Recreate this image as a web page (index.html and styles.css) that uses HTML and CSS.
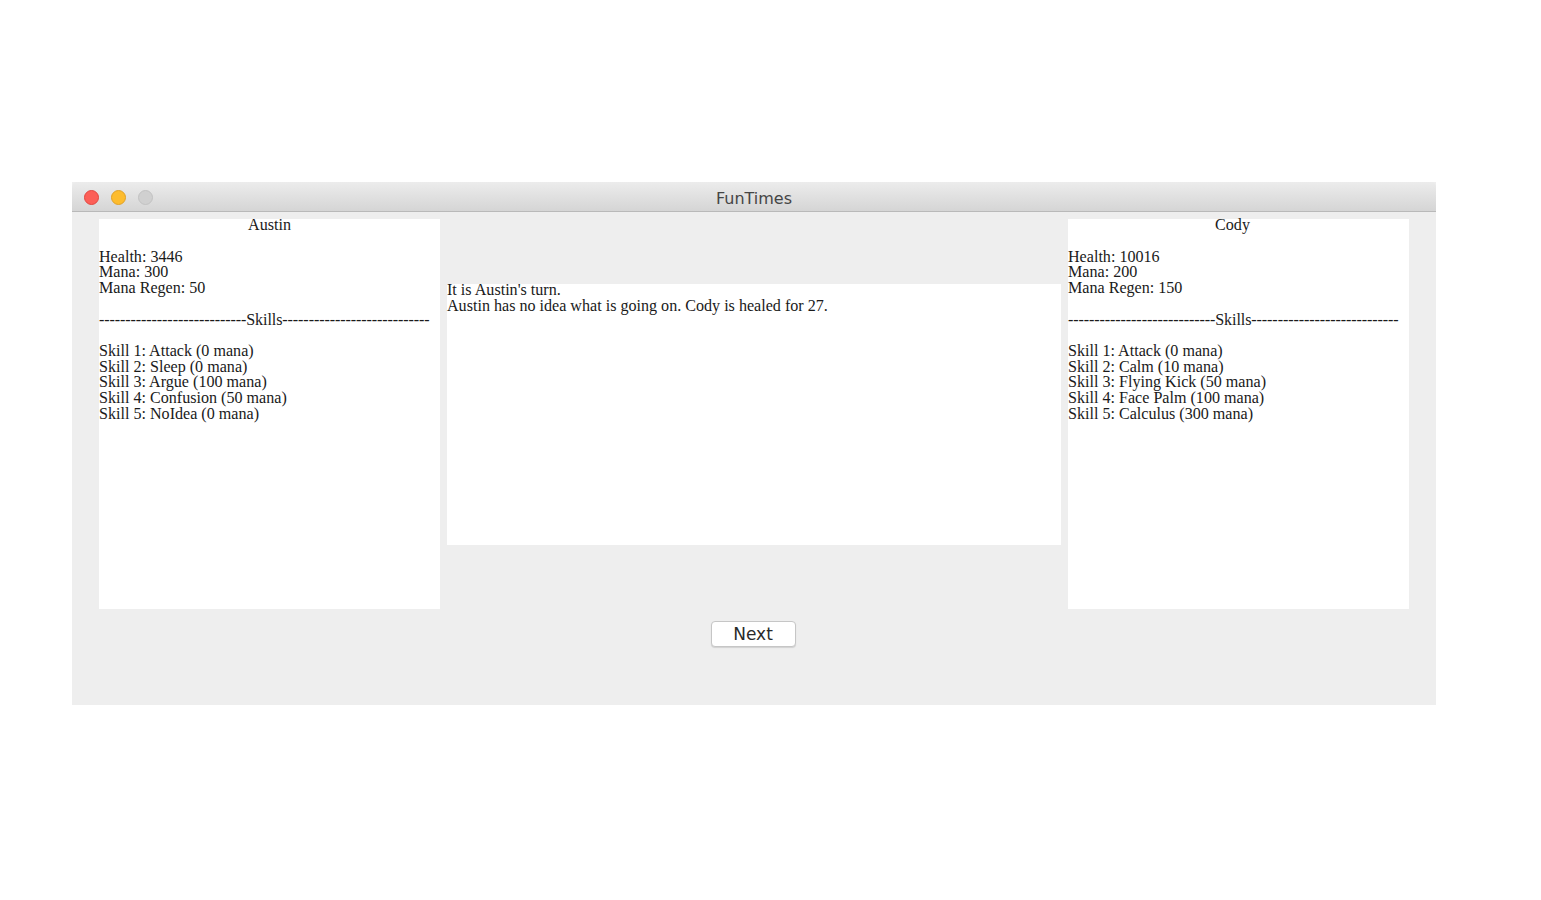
FILE: index.html
```html
<!DOCTYPE html>
<html>
<head>
<meta charset="utf-8">
<title>FunTimes</title>
<link rel="stylesheet" href="styles.css">
</head>
<body>
<div class="window">
  <div class="titlebar">
    <div class="lights">
      <span class="light red"></span>
      <span class="light yellow"></span>
      <span class="light gray"></span>
    </div>
    <div class="title">FunTimes</div>
  </div>
  <div class="content">
    <div class="panels">
      <div class="panel side">
        <div class="name">Austin</div>
        <div class="blank"></div>
        <div>Health: 3446</div>
        <div>Mana: 300</div>
        <div>Mana Regen: 50</div>
        <div class="blank"></div>
        <div class="dashes">----------------------------Skills----------------------------</div>
        <div class="blank"></div>
        <div>Skill 1: Attack (0 mana)</div>
        <div>Skill 2: Sleep (0 mana)</div>
        <div>Skill 3: Argue (100 mana)</div>
        <div>Skill 4: Confusion (50 mana)</div>
        <div>Skill 5: NoIdea (0 mana)</div>
      </div>
      <div class="panel log">
        <div>It is Austin's turn.</div>
        <div>Austin has no idea what is going on. Cody is healed for 27.</div>
      </div>
      <div class="panel side">
        <div class="name name-right">Cody</div>
        <div class="blank"></div>
        <div>Health: 10016</div>
        <div>Mana: 200</div>
        <div>Mana Regen: 150</div>
        <div class="blank"></div>
        <div class="dashes">----------------------------Skills----------------------------</div>
        <div class="blank"></div>
        <div>Skill 1: Attack (0 mana)</div>
        <div>Skill 2: Calm (10 mana)</div>
        <div>Skill 3: Flying Kick (50 mana)</div>
        <div>Skill 4: Face Palm (100 mana)</div>
        <div>Skill 5: Calculus (300 mana)</div>
      </div>
    </div>
    <button class="next">Next</button>
  </div>
</div>
</body>
</html>
```

FILE: styles.css
```css
html, body {
  margin: 0;
  padding: 0;
  background: #ffffff;
}

.window {
  margin: 182px 0 0 72px;
  width: 1364px;
  background: #eeeeee;
}

.titlebar {
  position: relative;
  height: 29px;
  border-bottom: 1px solid #b9b9b9;
  border-radius: 5px 5px 0 0;
  background: linear-gradient(#ececec, #d5d5d5);
  display: flex;
  align-items: center;
  justify-content: center;
}

.lights {
  position: absolute;
  left: 12px;
  top: 8px;
  display: flex;
  gap: 12px;
}

.light {
  width: 15px;
  height: 15px;
  border-radius: 50%;
  box-sizing: border-box;
}

.red { background: #fc5f57; border: 1px solid #e2463f; }
.yellow { background: #fdbc2e; border: 1px solid #e0a126; }
.gray { background: #d0d0d0; border: 1px solid #c2c2c2; }

.title {
  font-family: "DejaVu Sans", sans-serif;
  font-size: 16px;
  color: #454545;
  padding-top: 3px;
}

.content {
  padding: 7px 27px 58px;
  display: flex;
  flex-direction: column;
  align-items: center;
}

.panels {
  display: flex;
  align-items: center;
  gap: 7px;
  width: 100%;
}

.panel {
  background: #ffffff;
  font-family: "Liberation Serif", "Times New Roman", serif;
  font-size: 16.1px;
  line-height: 15.68px;
  color: #1a1a1a;
  box-sizing: border-box;
}

.panel > :first-child {
  margin-top: -1.6px;
}

.side {
  width: 341px;
  height: 390px;
  white-space: nowrap;
}

.log {
  flex: 1;
  height: 261px;
}

.name {
  text-align: center;
}

.name-right {
  padding-right: 12px;
}

.dashes {
  letter-spacing: -0.1px;
}

.blank {
  height: 15.68px;
}

.next {
  margin: 12px 2px 0 0;
  width: 85px;
  height: 26px;
  background: #ffffff;
  border: 1px solid #c6c6c6;
  border-radius: 4px;
  box-shadow: 0 1px 1px rgba(0,0,0,0.12);
  font-family: "DejaVu Sans", sans-serif;
  font-size: 17px;
  color: #2a2a2a;
  padding: 0;
}
```
